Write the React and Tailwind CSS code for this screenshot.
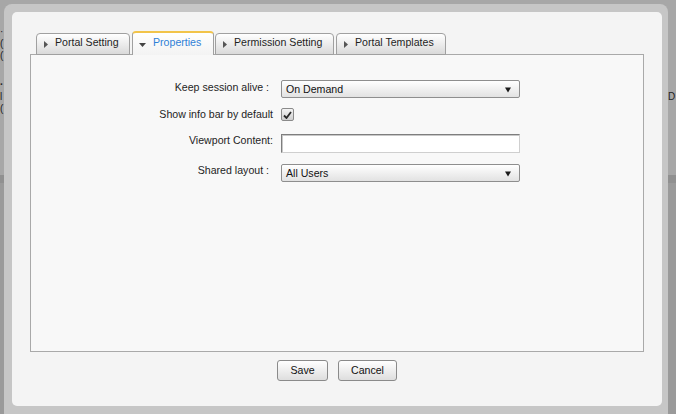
import React from "react";

function RightArrow() {
  return (
    <svg width="4" height="7" viewBox="0 0 4 7" className="shrink-0">
      <path d="M0 0 L4 3.5 L0 7 Z" fill="#555" />
    </svg>
  );
}

function DownArrow() {
  return (
    <svg width="7" height="4" viewBox="0 0 7 4" className="shrink-0">
      <path d="M0 0 L7 0 L3.5 4 Z" fill="#444" />
    </svg>
  );
}

function SelectArrow() {
  return (
    <svg width="6" height="6" viewBox="0 0 6 6" className="shrink-0">
      <path d="M0 0.5 L6 0.5 L3 5.5 Z" fill="#1a1a1a" />
    </svg>
  );
}

function Tab({ label, width, active }) {
  if (active) {
    return (
      <div
        className={`${width} h-[24px] rounded-t-[4px] border border-b-0 border-[#a0a0a0] border-t-2 border-t-[#f2c44a] bg-gradient-to-b from-white to-[#f3f3f3] flex items-center gap-[7px] pl-[6px] pb-[3px] text-[#2f7fd6]`}
      >
        <span className="mt-[4px]">
          <DownArrow />
        </span>
        <span>{label}</span>
      </div>
    );
  }
  return (
    <div
      className={`${width} h-[22px] rounded-t-[4px] border border-[#a0a0a0] bg-gradient-to-b from-white to-[#dadada] flex items-center gap-[7px] pl-[7px] pb-[3px] text-[#1e1e1e]`}
    >
      <span className="mt-[3px]">
        <RightArrow />
      </span>
      <span>{label}</span>
    </div>
  );
}

function Select({ value }) {
  return (
    <div className="w-[239px] h-[18px] rounded-[2px] border border-[#8e8e8e] bg-gradient-to-b from-white to-[#e2e2e2] flex items-center justify-between pl-[4px] pr-[8px] pt-[1px] text-[#111]">
      <span>{value}</span>
      <SelectArrow />
    </div>
  );
}

function Button({ children, width }) {
  return (
    <button className={`${width} h-[21px] rounded-[3px] border border-[#8a8a8a] bg-gradient-to-b from-white to-[#dedede] text-[10.6px] text-[#111] leading-none`}>
      {children}
    </button>
  );
}

export default function App() {
  return (
    <div className="relative w-[676px] h-[414px] overflow-hidden bg-[#a7a7a7] text-[10.6px] font-['Liberation_Sans',Arial,sans-serif]">
      {/* page under the mask */}
      <div className="flex flex-col h-full">
        <div className="h-[175px] flex justify-between text-[#222] text-[10px] leading-[12px]">
          <div className="w-[4px] pt-[26px]">
            <div>·</div>
            <div>(</div>
            <div>(</div>
            <div className="h-[17px]" />
            <div className="font-bold">·</div>
            <div>l</div>
            <div>(</div>
          </div>
          <div className="w-[8px] pt-[91px]">
            <div>D</div>
          </div>
        </div>
        <div className="h-[8px] bg-[#909090]" />
        <div className="flex-1 bg-[#9a9a9a]" />
      </div>

      {/* dialog */}
      <div className="absolute left-[4px] top-[4px] w-[664px] h-[420px] rounded-[8px] bg-[#c6c6c6] p-[8px]">
        <div className="w-[650px] h-[394px] rounded-[5px] bg-[#f4f4f4] pl-[18px] pt-[19px]">
          <div className="relative z-10 flex items-end ml-[6px] -mb-px">
            <Tab label="Portal Setting" width="w-[94px]" />
            <div className="ml-[2px]">
              <Tab label="Properties" width="w-[82px]" active />
            </div>
            <div className="ml-[1px]">
              <Tab label="Permission Setting" width="w-[119px]" />
            </div>
            <div className="ml-[2px]">
              <Tab label="Portal Templates" width="w-[110px]" />
            </div>
          </div>

          <div className="w-[614px] h-[298px] border border-[#a9a9a9] bg-[#f8f8f8] pt-[25px] text-[#1e1e1e]">
            <div className="flex items-start gap-[8px]">
              <div className="w-[242px] text-right leading-[13px] pt-[1px] pr-[4px]">Keep session alive :</div>
              <Select value="On Demand" />
            </div>
            <div className="flex items-start gap-[8px] mt-[10px]">
              <div className="w-[242px] text-right leading-[13px]">Show info bar by default</div>
              <div className="w-[13px] h-[13px] rounded-[2px] border border-[#8a8a8a] bg-gradient-to-b from-[#f4f4f4] to-[#cfcfcf] flex items-center justify-center">
                <svg width="9" height="8" viewBox="0 0 9 8">
                  <path d="M1 4.5 L3.5 7 L8 1" stroke="#2a2a2a" strokeWidth="1.8" fill="none" />
                </svg>
              </div>
            </div>
            <div className="flex items-start gap-[8px] mt-[13px]">
              <div className="w-[242px] text-right leading-[13px]">Viewport Content:</div>
              <div className="w-[239px] h-[19px] bg-white border border-[#cfcfcf] border-t-[#7e7e7e] border-l-[#7e7e7e] shadow-[inset_1px_1px_0_#c8c8c8]" />
            </div>
            <div className="flex items-start gap-[8px] mt-[11px]">
              <div className="w-[242px] text-right leading-[13px] pr-[4px]">Shared layout :</div>
              <Select value="All Users" />
            </div>
          </div>

          <div className="w-[614px] flex justify-center gap-[10px] mt-[8px]">
            <Button width="w-[51px]">Save</Button>
            <Button width="w-[59px]">Cancel</Button>
          </div>
        </div>
      </div>
    </div>
  );
}
